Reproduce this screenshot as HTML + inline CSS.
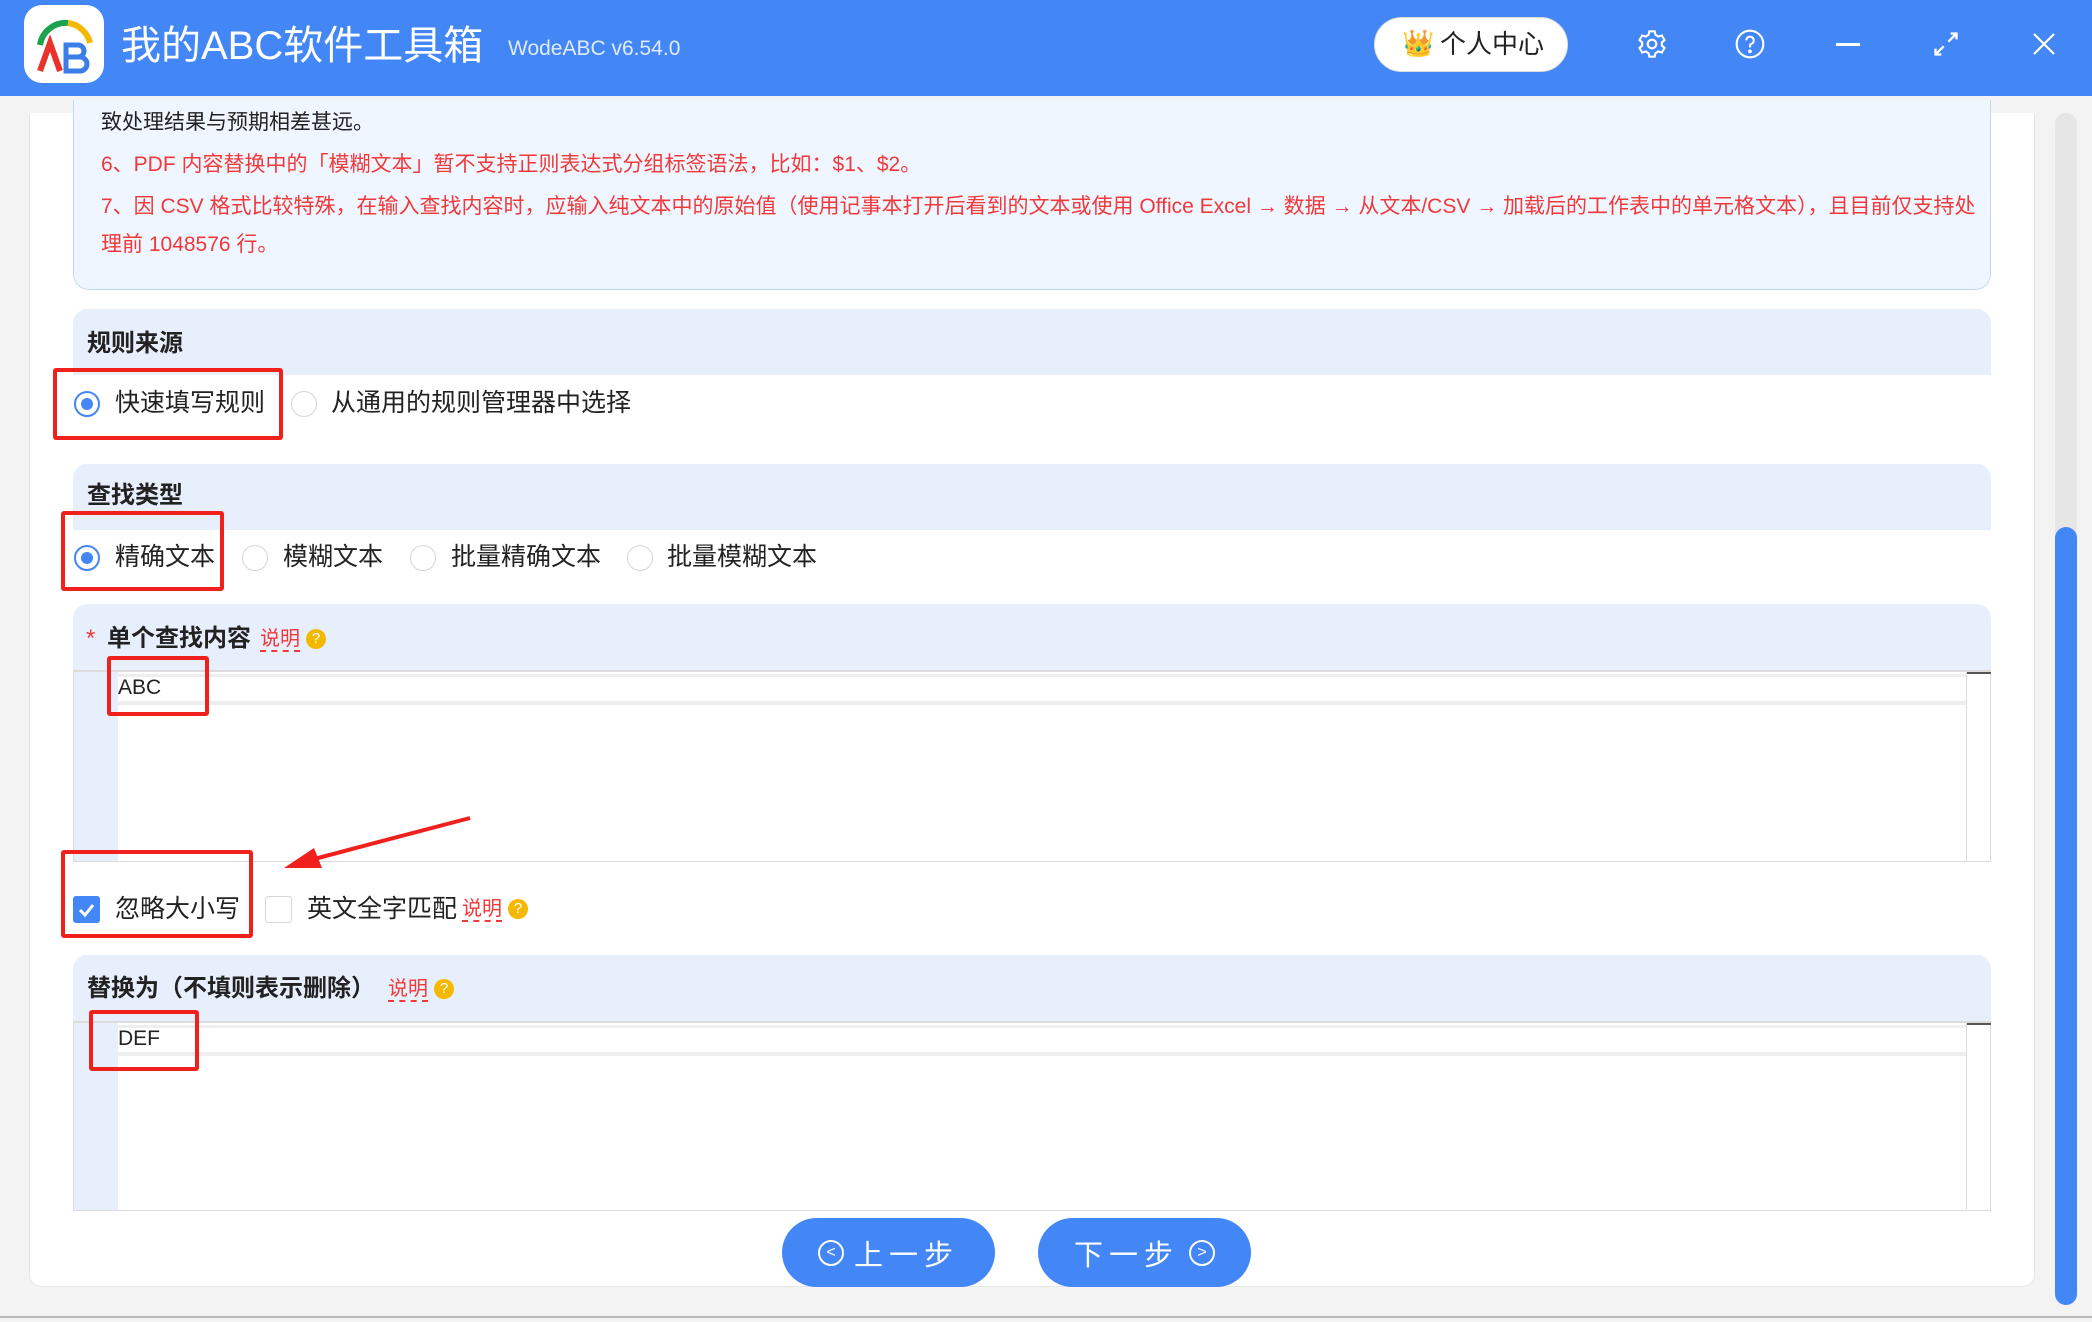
<!DOCTYPE html>
<html><head><meta charset="utf-8"><style>
*{margin:0;padding:0;box-sizing:border-box}
body{width:2092px;height:1322px;background:#f3f3f3;font-family:"Liberation Sans","Noto Sans CJK SC",sans-serif;position:relative;overflow:hidden;color:#222}
.a{position:absolute}
.hdr{left:0;top:0;width:2092px;height:96px;background:#4386f5}
.panel{left:29px;top:113px;width:2006px;height:1174px;background:#fff;border:1px solid #e6e6e6;border-top:none;border-radius:0 0 12px 12px}
.note{left:73px;top:100px;width:1918px;height:190px;background:#eff6ff;border:1px solid #bcd9f7;border-top:none;border-radius:0 0 16px 16px}
.t{font-size:21px;white-space:nowrap;line-height:1}
.red{color:#f0393a}
.band{left:73px;width:1918px;height:66px;background:#e8effc;border-radius:14px 14px 0 0}
.h{font-size:24px;font-weight:bold;color:#222;white-space:nowrap;line-height:1}
.lbl{font-size:25px;color:#222;white-space:nowrap;line-height:1}
.radio{width:26px;height:26px;border-radius:50%;border:1.5px solid #d6d6d6;background:#fff}
.radio.on{border:2px solid #4386f5}
.radio.on::after{content:"";position:absolute;left:5px;top:5px;width:12px;height:12px;border-radius:50%;background:#4386f5}
.box{border:4px solid #f0201c;border-radius:3px}
.ta{left:73px;width:1918px;background:#fff;border:1px solid #dcdcdc;border-top:2px solid #dcdcdc}
.gut{left:0;top:0;width:44px;height:100%;background:#e8effc}
.inp{left:44px;top:2px;right:24px;height:31px;border-top:3px solid #eee;border-bottom:4px solid #eee;background:#fff}
.sb{right:0;top:0;width:24px;height:100%;border-left:1px solid #ddd;background:#fff}
.sb::before{content:"";position:absolute;left:0;top:0;width:24px;height:2px;background:#555}
.sm{font-size:20px;color:#f0393a;border-bottom:2px dashed #f0393a;line-height:1.1;white-space:nowrap}
.q{width:20px;height:20px;border-radius:50%;background:#f5b800;color:#fff;font-size:15px;text-align:center;line-height:20px}
.btn{top:1218px;width:213px;height:69px;border-radius:35px;background:#4386f5;color:#fff;font-size:29px;display:flex;align-items:center;justify-content:center;gap:10px;letter-spacing:6px}
.ci{width:26px;height:26px;border:2px solid #fff;border-radius:50%;font-size:16px;line-height:22px;text-align:center;letter-spacing:0}
</style></head><body>
<div class="a hdr"></div>
<div class="a" style="left:24px;top:5px;width:80px;height:78px;background:#fff;border-radius:18px"></div>
<svg class="a" style="left:24px;top:5px" width="80" height="78" viewBox="0 0 80 78">
<path d="M16 40 A26 26 0 0 1 44 18" stroke="#1aa34a" stroke-width="6" fill="none"/>
<path d="M44 18 A26 26 0 0 1 66 38" stroke="#f5b800" stroke-width="6" fill="none"/>
<path d="M16 66 L26 38 L36 66" stroke="#e8322b" stroke-width="6" fill="none"/>
<path d="M42 40 h12 a6 6 0 0 1 0 12 h-12 z M42 52 h14 a7 7 0 0 1 0 14 h-14 z" stroke="#3b7ee8" stroke-width="5" fill="none"/>
</svg>
<div class="a" style="left:121px;top:26px;font-size:40px;color:#fff;white-space:nowrap;line-height:1">我的ABC软件工具箱</div>
<div class="a" style="left:508px;top:38px;font-size:21px;color:#e0ebff;white-space:nowrap;line-height:1">WodeABC v6.54.0</div>
<div class="a" style="left:1374px;top:17px;width:194px;height:55px;background:#fff;border-radius:28px;border:1px solid #ddd"></div>
<div class="a" style="left:1402px;top:30px;font-size:26px;line-height:1">👑</div>
<div class="a" style="left:1440px;top:31px;font-size:26px;color:#222;line-height:1">个人中心</div>
<svg class="a" style="left:1636px;top:28px" width="32" height="32" viewBox="0 0 24 24" fill="none" stroke="#fff" stroke-width="1.6"><circle cx="12" cy="12" r="3.2"/><path d="M10 2.5h4l.6 2.6 2.2 1.3 2.6-.8 2 3.4-2 1.8v2.4l2 1.8-2 3.4-2.6-.8-2.2 1.3-.6 2.6h-4l-.6-2.6-2.2-1.3-2.6.8-2-3.4 2-1.8v-2.4l-2-1.8 2-3.4 2.6.8 2.2-1.3z"/></svg>
<svg class="a" style="left:1734px;top:28px" width="32" height="32" viewBox="0 0 24 24" fill="none" stroke="#fff" stroke-width="1.6"><circle cx="12" cy="12" r="10"/><path d="M9.2 9.3a2.8 2.8 0 1 1 3.8 2.6c-.7.3-1 .8-1 1.6v1"/><circle cx="12" cy="17.5" r=".6" fill="#fff"/></svg>
<div class="a" style="left:1836px;top:43px;width:24px;height:3px;background:#fff"></div>
<svg class="a" style="left:1932px;top:30px" width="28" height="28" viewBox="0 0 24 24" fill="none" stroke="#fff" stroke-width="2"><path d="M14 10l7-7M16 3h5v5M10 14l-7 7M3 16v5h5"/></svg>
<svg class="a" style="left:2032px;top:32px" width="24" height="24" viewBox="0 0 24 24" stroke="#fff" stroke-width="2.2"><path d="M2 2l20 20M22 2L2 22"/></svg>

<div class="a panel"></div>
<div class="a" style="left:2055px;top:113px;width:22px;height:1192px;background:#e6e6e6;border-radius:11px"></div>
<div class="a" style="left:2055px;top:527px;width:22px;height:778px;background:#4386f5;border-radius:11px"></div>
<div class="a" style="left:0;top:1316px;width:2092px;height:2px;background:#bbb"></div>

<div class="a note"></div>
<div class="a t" style="left:101px;top:112px;color:#222">致处理结果与预期相差甚远。</div>
<div class="a t red" style="left:101px;top:154px">6、PDF 内容替换中的「模糊文本」暂不支持正则表达式分组标签语法，比如：$1、$2。</div>
<div class="a t red" style="left:101px;top:196px">7、因 CSV 格式比较特殊，在输入查找内容时，应输入纯文本中的原始值（使用记事本打开后看到的文本或使用 Office Excel → 数据 → 从文本/CSV → 加载后的工作表中的单元格文本），且目前仅支持处</div>
<div class="a t red" style="left:101px;top:234px">理前 1048576 行。</div>

<div class="a band" style="top:309px"></div>
<div class="a h" style="left:87px;top:332px">规则来源</div>
<div class="a radio on" style="left:74px;top:391px"></div>
<div class="a lbl" style="left:115px;top:391px">快速填写规则</div>
<div class="a radio" style="left:291px;top:391px"></div>
<div class="a lbl" style="left:331px;top:391px">从通用的规则管理器中选择</div>
<div class="a box" style="left:53px;top:368px;width:230px;height:72px"></div>

<div class="a band" style="top:464px"></div>
<div class="a h" style="left:87px;top:484px">查找类型</div>
<div class="a radio on" style="left:74px;top:545px"></div>
<div class="a lbl" style="left:115px;top:545px">精确文本</div>
<div class="a radio" style="left:242px;top:545px"></div>
<div class="a lbl" style="left:283px;top:545px">模糊文本</div>
<div class="a radio" style="left:410px;top:545px"></div>
<div class="a lbl" style="left:451px;top:545px">批量精确文本</div>
<div class="a radio" style="left:627px;top:545px"></div>
<div class="a lbl" style="left:667px;top:545px">批量模糊文本</div>
<div class="a box" style="left:61px;top:511px;width:163px;height:80px"></div>

<div class="a band" style="top:604px"></div>
<div class="a h" style="left:86px;top:627px;color:#f0393a;font-weight:normal">*</div>
<div class="a h" style="left:107px;top:627px">单个查找内容</div>
<div class="a sm" style="left:260px;top:628px">说明</div>
<div class="a q" style="left:306px;top:629px">?</div>
<div class="a ta" style="top:670px;height:192px"><div class="a gut"></div><div class="a inp"></div><div class="a sb"></div></div>
<div class="a" style="left:118px;top:677px;font-size:21px;line-height:1">ABC</div>
<div class="a box" style="left:107px;top:656px;width:102px;height:60px"></div>
<svg class="a" style="left:270px;top:810px" width="210" height="70" viewBox="0 0 210 70"><path d="M200 8 L40 50" stroke="#f0201c" stroke-width="4"/><path d="M14 58 L44 38 L52 58 Z" fill="#f0201c"/><path d="M200 8 L30 54" stroke="#f0201c" stroke-width="2"/></svg>
<div class="a" style="left:73px;top:896px;width:27px;height:27px;background:#4386f5;border-radius:3px"></div>
<svg class="a" style="left:73px;top:896px" width="27" height="27" viewBox="0 0 27 27"><path d="M7 14l5 5 8-10" stroke="#fff" stroke-width="3" fill="none"/></svg>
<div class="a lbl" style="left:115px;top:897px">忽略大小写</div>
<div class="a" style="left:265px;top:896px;width:27px;height:27px;border:1.5px solid #d6d6d6;border-radius:3px;background:#fff"></div>
<div class="a lbl" style="left:307px;top:897px">英文全字匹配</div>
<div class="a sm" style="left:462px;top:898px">说明</div>
<div class="a q" style="left:508px;top:899px">?</div>
<div class="a box" style="left:61px;top:850px;width:192px;height:88px"></div>

<div class="a band" style="top:955px"></div>
<div class="a h" style="left:87px;top:977px">替换为（不填则表示删除）</div>
<div class="a sm" style="left:388px;top:978px">说明</div>
<div class="a q" style="left:434px;top:979px">?</div>
<div class="a ta" style="top:1021px;height:190px"><div class="a gut"></div><div class="a inp"></div><div class="a sb"></div></div>
<div class="a" style="left:118px;top:1028px;font-size:21px;line-height:1">DEF</div>
<div class="a box" style="left:89px;top:1010px;width:110px;height:61px"></div>

<div class="a btn" style="left:782px"><span class="ci">&lt;</span><span>上一步</span></div>
<div class="a btn" style="left:1038px"><span>下一步</span><span class="ci">&gt;</span></div>
</body></html>
